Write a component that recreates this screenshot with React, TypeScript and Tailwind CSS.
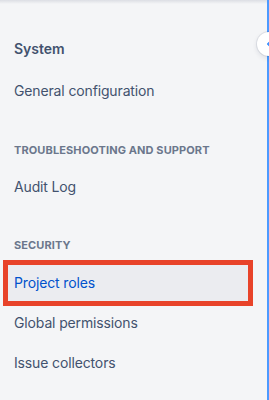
import React from 'react';

const items = {
  system: ['General configuration'],
  troubleshooting: ['Audit Log'],
  security: ['Global permissions', 'Issue collectors'],
};

const NavItem: React.FC<{ label: string; active?: boolean }> = ({ label, active }) => (
  <div
    className={`h-10 flex items-center px-[6px] text-[14px] tracking-[-0.01em] ${
      active ? 'bg-[#ebecf0] text-[#0052cc]' : 'text-[#42526e]'
    }`}
  >
    {label}
  </div>
);

const Heading: React.FC<{ label: string; className?: string }> = ({ label, className }) => (
  <div className={`h-5 flex items-center px-[6px] text-[11px] font-bold uppercase tracking-[0.01em] text-[#6b778c] ${className ?? ''}`}>
    {label}
  </div>
);

export default function App() {
  return (
    <div className="relative w-[269px] h-[400px] overflow-hidden bg-[#f4f5f7] font-['Inter',sans-serif]">
      <div className="h-[4px] bg-gradient-to-b from-[#dcdee4] to-[#f4f5f7]" />
      <nav className="w-[240px] ml-2 pt-[26px]">
        <div className="h-9 flex items-center px-[6px] text-[14px] font-semibold text-[#42526e]">System</div>
        <div className="mt-1">
          {items.system.map(l => <NavItem key={l} label={l} />)}
        </div>
        <Heading label="Troubleshooting and support" className="mt-[30px]" />
        <div className="mt-[6px]">
          {items.troubleshooting.map(l => <NavItem key={l} label={l} />)}
        </div>
        <Heading label="Security" className="mt-[29px]" />
        <div className="mt-[7px]">
          <div className="relative">
            <NavItem label="Project roles" active />
            <div className="absolute -left-[5px] -right-[5px] -top-[2px] -bottom-[4px] border-[5px] border-[#e8432a] pointer-events-none" />
          </div>
          {items.security.map(l => <NavItem key={l} label={l} />)}
        </div>
      </nav>
      <div className="absolute right-0 top-0 bottom-0 w-[2px] bg-[#4c9aff]" />
      <button className="absolute left-[257px] top-[32px] w-6 h-6 rounded-full bg-white shadow-[0_0_0_1px_rgba(9,30,66,0.08),0_2px_4px_1px_rgba(9,30,66,0.08)] flex items-center justify-center">
        <svg width="16" height="16" viewBox="0 0 24 24" className="text-[#2684ff]">
          <path d="M13.7 8.3a1 1 0 0 0-1.4 0l-3 3a1 1 0 0 0 0 1.4l3 3a1 1 0 0 0 1.4-1.4L11.4 12l2.3-2.3a1 1 0 0 0 0-1.4z" fill="currentColor" />
        </svg>
      </button>
    </div>
  );
}
